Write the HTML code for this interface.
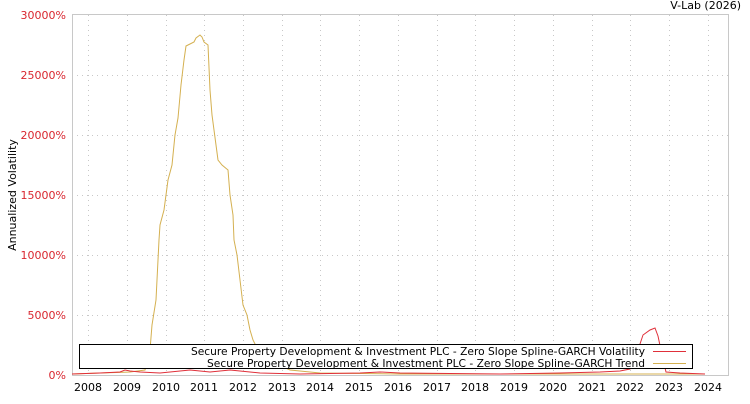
<!DOCTYPE html>
<html><head><meta charset="utf-8"><style>
body{margin:0;background:#fff;width:750px;height:400px;overflow:hidden;font-family:"DejaVu Sans","Liberation Sans",sans-serif}
</style></head><body>
<svg width="750" height="400" viewBox="0 0 750 400" xmlns="http://www.w3.org/2000/svg" font-family="DejaVu Sans, Liberation Sans, sans-serif">
<rect x="72.5" y="14.5" width="656" height="361" fill="#fff" stroke="#c8c8c8"/>
<g stroke="#c8c8c8" stroke-dasharray="1,4">
<line x1="72" y1="75.5" x2="729" y2="75.5"/><line x1="72" y1="135.5" x2="729" y2="135.5"/><line x1="72" y1="195.5" x2="729" y2="195.5"/><line x1="72" y1="255.5" x2="729" y2="255.5"/><line x1="72" y1="315.5" x2="729" y2="315.5"/>
<line x1="88.5" y1="15" x2="88.5" y2="375"/><line x1="127.5" y1="15" x2="127.5" y2="375"/><line x1="166.5" y1="15" x2="166.5" y2="375"/><line x1="204.5" y1="15" x2="204.5" y2="375"/><line x1="243.5" y1="15" x2="243.5" y2="375"/><line x1="282.5" y1="15" x2="282.5" y2="375"/><line x1="320.5" y1="15" x2="320.5" y2="375"/><line x1="359.5" y1="15" x2="359.5" y2="375"/><line x1="398.5" y1="15" x2="398.5" y2="375"/><line x1="437.5" y1="15" x2="437.5" y2="375"/><line x1="475.5" y1="15" x2="475.5" y2="375"/><line x1="514.5" y1="15" x2="514.5" y2="375"/><line x1="553.5" y1="15" x2="553.5" y2="375"/><line x1="592.5" y1="15" x2="592.5" y2="375"/><line x1="630.5" y1="15" x2="630.5" y2="375"/><line x1="669.5" y1="15" x2="669.5" y2="375"/><line x1="708.5" y1="15" x2="708.5" y2="375"/>
</g>
<g fill="#d9262f" font-size="11" text-anchor="end">
<text x="66" y="19">30000%</text><text x="66" y="79">25000%</text><text x="66" y="139">20000%</text><text x="66" y="199">15000%</text><text x="66" y="259">10000%</text><text x="66" y="319">5000%</text><text x="66" y="379">0%</text>
</g>
<g fill="#000" font-size="11" text-anchor="middle">
<text x="88" y="391">2008</text><text x="127" y="391">2009</text><text x="166" y="391">2010</text><text x="204" y="391">2011</text><text x="243" y="391">2012</text><text x="282" y="391">2013</text><text x="320" y="391">2014</text><text x="359" y="391">2015</text><text x="398" y="391">2016</text><text x="437" y="391">2017</text><text x="475" y="391">2018</text><text x="514" y="391">2019</text><text x="553" y="391">2020</text><text x="592" y="391">2021</text><text x="630" y="391">2022</text><text x="669" y="391">2023</text><text x="708" y="391">2024</text>
</g>
<text x="741" y="9" font-size="11" text-anchor="end">V-Lab (2026)</text>
<text transform="translate(16,195) rotate(-90)" font-size="11" text-anchor="middle">Annualized Volatility</text>
<polyline fill="none" stroke="#d4b050" stroke-width="1" points="72,374 100,373 130,372 145,370 150,350 152,325 156,300 159,240 160,225 164,210 168,180 172,165 175,135 178,118 181,85 184,60 186,46 190,44 194,42 196,38 200,35 202,37 204,42 208,45 210,90 212,115 214,130 216,145 218,160 222,165 228,170 230,195 233,215 234,240 237,255 240,280 243,305 247,315 250,330 253,340 258,350 265,357 275,363 290,370 320,373 400,374 705,374"/>
<polyline fill="none" stroke="#e0303a" stroke-width="1" points="72,374 100,373 120,372 125,370 130,371 140,372 160,373 170,372 180,371 190,370 200,371 210,372 230,370 240,371 260,373 300,374 360,373 380,372 400,373 500,374 560,373 600,372 620,371 630,369 638,350 643,335 650,330 655,328 658,336 662,355 666,372 680,373 705,374"/>
<rect x="79.5" y="344.5" width="613" height="24" fill="#fff" stroke="#000"/>
<g font-size="11"><text x="191" y="355" textLength="454" lengthAdjust="spacingAndGlyphs">Secure Property Development &amp; Investment PLC - Zero Slope Spline-GARCH Volatility</text><text x="207" y="367" textLength="438" lengthAdjust="spacingAndGlyphs">Secure Property Development &amp; Investment PLC - Zero Slope Spline-GARCH Trend</text></g>
<line x1="653" y1="351.5" x2="686" y2="351.5" stroke="#e0303a"/>
<line x1="653" y1="363.5" x2="686" y2="363.5" stroke="#d4b050"/>
</svg>
</body></html>
